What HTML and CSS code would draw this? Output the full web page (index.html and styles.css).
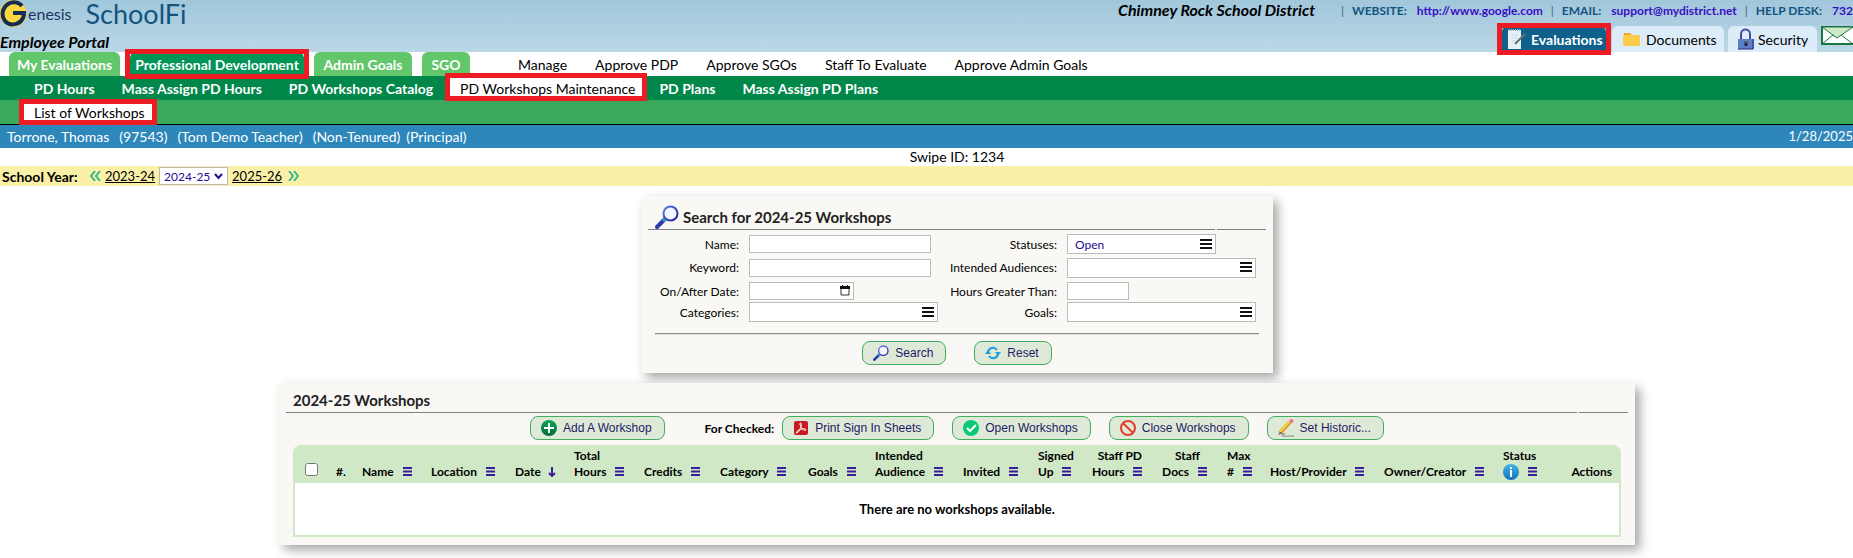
FILE: index.html
```html
<!DOCTYPE html>
<html lang="en">
<head>
    <meta charset="UTF-8">
    <meta name="viewport" content="width=device-width, initial-scale=1.0">
    <title>Genesis SchoolFi - Employee Portal</title>
    <link rel="stylesheet" href="styles.css">
</head>
<body>

    <!-- Shared icons -->
    <svg class="sprite" aria-hidden="true">
        <defs>
            <linearGradient id="lens" x1="0" y1="0" x2="1" y2="1">
                <stop offset="0" stop-color="#5a82e6"/>
                <stop offset="1" stop-color="#1c1c8c"/>
            </linearGradient>
            <linearGradient id="greenBall" x1="0" y1="0" x2="0" y2="1">
                <stop offset="0" stop-color="#0aa653"/>
                <stop offset="1" stop-color="#046b3c"/>
            </linearGradient>
            <linearGradient id="blueBall" x1="0" y1="0" x2="0" y2="1">
                <stop offset="0" stop-color="#43b4ea"/>
                <stop offset="1" stop-color="#1272b8"/>
            </linearGradient>
        </defs>
        <symbol id="magnifier" viewBox="0 0 24 24">
            <path d="M2 22 10 14" stroke="#2b3ba8" stroke-width="4" stroke-linecap="round"/>
            <path d="M8 16 11 13" stroke="#36a9d8" stroke-width="3"/>
            <circle cx="15.500" cy="8.500" r="7" fill="#f4f7ff" stroke="url(#lens)" stroke-width="2"/>
        </symbol>
        <symbol id="bars" viewBox="0 0 12 11">
            <path d="M0 1h12M0 5h12M0 9h12" stroke="#111" stroke-width="2"/>
        </symbol>
        <symbol id="sort" viewBox="0 0 9 9">
            <path d="M0 1h9M0 4.500h9M0 8h9" stroke="#3a1d9c" stroke-width="2"/>
        </symbol>
    </svg>

    <header class="banner">
        <div class="brand">
            <div class="logo-row">
                <svg class="logo" width="28" height="28" viewBox="0 0 28 28">
                    <circle cx="13" cy="13.500" r="13.500" fill="#fbd63f"/>
                    <path d="M22 6C19 2 13 1 8 4 2 8 1 16 5 21c4 5 12 4 16 0 2-2 3-4 3-8H13" fill="none" stroke="#152c55" stroke-width="4"/>
                </svg>
                <span class="logo-text">enesis</span>
                <span class="product">SchoolFi</span>
            </div>
            <div class="portal">Employee Portal</div>
        </div>
        <div class="banner-right">
            <div class="contact">
                <span class="district">Chimney Rock School District</span>
                <span class="bar">|</span>
                <span class="key">WEBSITE:</span>
                <a href="#">http://www.google.com</a>
                <span class="bar">|</span>
                <span class="key">EMAIL:</span>
                <a href="#">support@mydistrict.net</a>
                <span class="bar">|</span>
                <span class="key">HELP DESK:</span>
                <a href="#">732</a>
            </div>
            <nav class="modules">
                <a class="module current marked" href="#">
                    <svg width="18" height="20" viewBox="0 0 18 20">
                        <path d="M0 1h13v19H0z" fill="#e6f1f7"/>
                        <path d="M1 1h11" stroke="#8cb4c8" stroke-width="2" stroke-dasharray="1 1"/>
                        <path d="M3 6h7M3 9h7M3 12h5" stroke="#c5dbe6"/>
                        <path d="M7 15 17 5" stroke="#6d6d70" stroke-width="2"/>
                    </svg>
                    Evaluations
                </a>
                <a class="module documents" href="#">
                    <svg width="18" height="16" viewBox="0 0 18 16">
                        <path d="M1 2h6l2 2h8v3H1z" fill="#f0a82e"/>
                        <rect x="0" y="4" width="17" height="11" rx="1" fill="#ffcb4a"/>
                    </svg>
                    Documents
                </a>
                <a class="module security" href="#">
                    <svg width="18" height="22" viewBox="0 0 18 22">
                        <path d="M4 12V6c0-6 9-6 9 0v6" fill="none" stroke="#4a4aa0" stroke-width="2"/>
                        <rect x="1" y="11" width="16" height="10" fill="#5b7fc4"/>
                        <path d="M16 11v10H1" fill="none" stroke="#2b2b80"/>
                        <path d="M9 13v5" stroke="#2a2440" stroke-width="3"/>
                        <path d="M8 14h2" stroke="#c9a27a"/>
                    </svg>
                    Security
                </a>
                <a class="mail" href="#" aria-label="Messages">
                    <svg width="32" height="20" viewBox="0 0 32 20">
                        <path d="M1 1h32v17H1z" fill="#fff" stroke="#1c7544" stroke-width="2"/>
                        <path d="M1 1 16 12 32 1z" fill="#cfe8c6" stroke="#1c7544"/>
                        <path d="M1 18 12 9M32 18 20 9" stroke="#1c7544"/>
                    </svg>
                </a>
            </nav>
        </div>
    </header>

    <nav class="tabs">
        <a class="tab my-evals" href="#">My Evaluations</a>
        <a class="tab prof-dev current marked" href="#">Professional Development</a>
        <a class="tab admin-goals" href="#">Admin Goals</a>
        <a class="tab sgo" href="#">SGO</a>
        <div class="plain-links">
            <a href="#">Manage</a>
            <a href="#">Approve PDP</a>
            <a href="#">Approve SGOs</a>
            <a href="#">Staff To Evaluate</a>
            <a href="#">Approve Admin Goals</a>
        </div>
    </nav>

    <nav class="subnav">
        <a href="#">PD Hours</a>
        <a href="#">Mass Assign PD Hours</a>
        <a href="#">PD Workshops Catalog</a>
        <a class="current marked" href="#">PD Workshops Maintenance</a>
        <a href="#">PD Plans</a>
        <a href="#">Mass Assign PD Plans</a>
    </nav>

    <nav class="subnav third">
        <a class="current marked" href="#">List of Workshops</a>
    </nav>

    <div class="person">
        <span>Torrone, Thomas</span>
        <span>(97543)</span>
        <span>(Tom Demo Teacher)</span>
        <span>(Non-Tenured)</span>
        <span class="role">(Principal)</span>
        <span class="today">1/28/2025</span>
    </div>

    <div class="swipe">Swipe ID: 1234</div>

    <div class="year-bar">
        <label for="schoolYear">School Year:</label>
        <svg width="11" height="10" viewBox="0 0 11 10"><path d="M5 0 1 5l4 5M10 0 6 5l4 5"/></svg>
        <a href="#">2023-24</a>
        <span class="year-select">
            <select id="schoolYear"><option>2024-25</option></select>
            <svg width="9" height="7" viewBox="0 0 9 7"><path d="M1 1l3.500 4L8 1"/></svg>
        </span>
        <a href="#">2025-26</a>
        <svg class="next" width="11" height="10" viewBox="0 0 11 10"><path d="M1 0l4 5-4 5M6 0l4 5-4 5"/></svg>
    </div>

    <main>
        <section class="panel search-panel">
            <div class="panel-title with-icon">
                <h2><svg width="24" height="24"><use href="#magnifier"/></svg>Search for 2024-25 Workshops</h2>
                <span></span>
            </div>
            <form>
                <div class="fields">
                    <label for="name">Name:</label>
                    <input type="text" id="name" class="text">
                    <label for="statuses">Statuses:</label>
                    <button type="button" id="statuses" class="picker short">Open<svg width="12" height="11"><use href="#bars"/></svg></button>

                    <label for="keyword">Keyword:</label>
                    <input type="text" id="keyword" class="text">
                    <label for="audiences">Intended Audiences:</label>
                    <button type="button" id="audiences" class="picker"><svg width="12" height="11"><use href="#bars"/></svg></button>

                    <label for="afterDate">On/After Date:</label>
                    <span class="date-box">
                        <input type="text" id="afterDate">
                        <svg width="10" height="11" viewBox="0 0 10 11">
                            <path d="M1 2h8v8H1z" fill="none" stroke="#333"/>
                            <path d="M0 1h10v3H0zM2 0h1v1H2zM7 0h1v1H7z" fill="#111"/>
                        </svg>
                    </span>
                    <label for="hours">Hours Greater Than:</label>
                    <input type="text" id="hours" class="text hours">

                    <label for="categories">Categories:</label>
                    <button type="button" id="categories" class="picker"><svg width="12" height="11"><use href="#bars"/></svg></button>
                    <label for="goals">Goals:</label>
                    <button type="button" id="goals" class="picker"><svg width="12" height="11"><use href="#bars"/></svg></button>
                </div>
                <hr>
                <div class="form-buttons">
                    <button type="button" class="btn"><svg width="16" height="16"><use href="#magnifier"/></svg>Search</button>
                    <button type="button" class="btn">
                        <svg width="16" height="16" viewBox="0 0 16 16">
                            <path d="M3 7a5 5 0 0 1 9-2M13 9a5 5 0 0 1-9 2" fill="none" stroke="#1d9fdb" stroke-width="2"/>
                            <path d="M10 7h6l-3 4zM0 9h6L3 5z" fill="#1d9fdb"/>
                        </svg>Reset</button>
                </div>
            </form>
        </section>

        <section class="panel list-panel">
            <div class="panel-title">
                <h2>2024-25 Workshops</h2>
                <span></span>
            </div>
            <div class="actions">
                <button type="button" class="btn add">
                    <svg width="16" height="16" viewBox="0 0 16 16">
                        <circle cx="8" cy="8" r="8" fill="url(#greenBall)"/>
                        <path d="M8 3v10M3 8h10" stroke="#fff" stroke-width="2"/>
                    </svg>Add A Workshop</button>
                <span class="for-checked">For Checked:</span>
                <button type="button" class="btn print">
                    <svg width="16" height="16" viewBox="0 0 16 16">
                        <rect x="1" y="1" width="14" height="14" rx="2" fill="#c81a22"/>
                        <path d="M7.500 3c-2 0 1 5 3 7 2 1 3 0 2-1-2-1-8 1-9 3-1 2 2 1 3-2 1-2 3-7 1-7" fill="none" stroke="#fff"/>
                    </svg>Print Sign In Sheets</button>
                <button type="button" class="btn">
                    <svg width="16" height="16" viewBox="0 0 16 16">
                        <circle cx="8" cy="8" r="8" fill="#08c979"/>
                        <path d="M4 8l3 3 6-6" fill="none" stroke="#fff" stroke-width="2"/>
                    </svg>Open Workshops</button>
                <button type="button" class="btn">
                    <svg width="16" height="16" viewBox="0 0 16 16">
                        <circle cx="8" cy="8" r="7" fill="none" stroke="#e53e30" stroke-width="2"/>
                        <path d="M3 3l10 10" stroke="#e53e30" stroke-width="2"/>
                    </svg>Close Workshops</button>
                <button type="button" class="btn">
                    <svg width="16" height="18" viewBox="0 0 16 18">
                        <path d="M2 14 12 3" stroke="#d89a1c" stroke-width="4"/>
                        <path d="M2 13 12 2" stroke="#f5cf4c" stroke-width="2"/>
                        <circle cx="13.500" cy="2" r="2" fill="#f06aa8"/>
                        <path d="M0 16l2-3 2 1z" fill="#444"/>
                        <path d="M1 15c6-1 9 0 3 1-2 2 6 1 12 1" fill="none" stroke="#888"/>
                    </svg>Set Historic...</button>
            </div>
            <div class="table-box">
                <table>
                    <colgroup>
                        <col class="c-check"><col class="c-num"><col class="c-name"><col class="c-location"><col class="c-date">
                        <col class="c-total"><col class="c-credits"><col class="c-category"><col class="c-goals"><col class="c-audience">
                        <col class="c-invited"><col class="c-signed"><col class="c-staffpd"><col class="c-docs"><col class="c-max">
                        <col class="c-host"><col class="c-owner"><col class="c-status"><col>
                    </colgroup>
                    <thead>
                        <tr>
                            <th><input type="checkbox" aria-label="Select all workshops"></th>
                            <th>#.</th>
                            <th>Name <svg class="sort"><use href="#sort"/></svg></th>
                            <th>Location <svg class="sort"><use href="#sort"/></svg></th>
                            <th>Date <svg class="down" viewBox="0 0 8 10"><path d="M4 0v9M1 6l3 3 3-3"/></svg></th>
                            <th>Total<br>Hours <svg class="sort"><use href="#sort"/></svg></th>
                            <th>Credits <svg class="sort"><use href="#sort"/></svg></th>
                            <th>Category <svg class="sort"><use href="#sort"/></svg></th>
                            <th>Goals <svg class="sort"><use href="#sort"/></svg></th>
                            <th>Intended<br>Audience <svg class="sort"><use href="#sort"/></svg></th>
                            <th>Invited <svg class="sort"><use href="#sort"/></svg></th>
                            <th>Signed<br>Up <svg class="sort"><use href="#sort"/></svg></th>
                            <th class="right">Staff PD<br>Hours <svg class="sort"><use href="#sort"/></svg></th>
                            <th class="right"><span class="staff">Staff</span><br>Docs <svg class="sort"><use href="#sort"/></svg></th>
                            <th>Max<br># <svg class="sort"><use href="#sort"/></svg></th>
                            <th>Host/Provider <svg class="sort"><use href="#sort"/></svg></th>
                            <th>Owner/Creator <svg class="sort"><use href="#sort"/></svg></th>
                            <th>Status<br><svg class="info" viewBox="0 0 16 16"><circle cx="8" cy="8" r="8" fill="url(#blueBall)"/><path d="M8 3v2M8 6v7" stroke="#fff" stroke-width="2"/></svg><svg class="sort"><use href="#sort"/></svg></th>
                            <th class="last">Actions</th>
                        </tr>
                    </thead>
                    <tbody>
                        <tr><td colspan="19">There are no workshops available.</td></tr>
                    </tbody>
                </table>
            </div>
        </section>
    </main>

</body>
</html>
```
FILE: styles.css
```css
* {
    box-sizing: border-box;
}
body {
    margin: 0;
    font-family: Lato, "Liberation Sans", sans-serif;
    font-size: 14px;
    color: #000;
    background-color: #fff;
    overflow-x: hidden;
}
a {
    color: inherit;
    text-decoration: none;
    white-space: nowrap;
}
svg {
    flex: none;
}
.sprite {
    position: absolute;
    width: 0;
    height: 0;
}

/* Red box round the current item of each menu */
.marked {
    position: relative;
}
.marked::after {
    content: "";
    position: absolute;
    inset: -3px -5px;
    border: 5px solid #ed1c24;
    z-index: 2;
}

/* Banner */
.banner {
    display: flex;
    justify-content: space-between;
    height: 52px;
    background: linear-gradient(#a1c7db, #bad7e6);
}
.logo-row {
    display: flex;
    align-items: center;
    height: 28px;
}
.logo-text {
    color: #1e3560;
    font-size: 16px;
    line-height: 32px;
}
.product {
    margin-left: 14px;
    color: #12547f;
    font-size: 27px;
    line-height: 28px;
}
.portal {
    margin-top: 4px;
    font-size: 16px;
    line-height: 20px;
    font-weight: bold;
    font-style: italic;
}
.contact {
    display: flex;
    align-items: center;
    justify-content: flex-end;
    height: 20px;
    font-size: 12px;
    font-weight: bold;
    white-space: nowrap;
}
.contact a {
    color: #3a0cc4;
    margin-left: 10px;
}
.district {
    margin-right: 18px;
    font-size: 16px;
    font-style: italic;
    line-height: 20px;
}
.bar {
    color: #41647c;
    margin: 0 8px;
    font-weight: normal;
}
.key {
    color: #12547f;
}
.modules {
    display: flex;
    justify-content: flex-end;
    align-items: flex-start;
    margin-top: 6px;
    font-size: 14px;
}
.module {
    display: flex;
    align-items: center;
    gap: 5px;
    height: 26px;
    padding-left: 11px;
    margin-right: 4px;
    border-radius: 6px 6px 0 0;
    background-color: #dcecf8;
}
.module.current {
    width: 104px;
    padding-left: 6px;
    margin-right: 6px;
    background-color: #10608c;
    color: #fff;
    font-weight: bold;
}
.documents {
    width: 112px;
}
.security {
    width: 89px;
    padding-left: 9px;
    gap: 3px;
}
.mail svg {
    display: block;
}

/* Menus */
.tabs {
    display: flex;
    height: 24px;
    padding-left: 9px;
    gap: 10px;
    line-height: 26px;
}
.tab {
    border-radius: 6px 6px 0 0;
    background-color: #62c66b;
    color: #fff;
    font-weight: bold;
    text-align: center;
}
.tab.current {
    background-color: #009457;
}
.my-evals {
    width: 111px;
}
.prof-dev {
    width: 174px;
}
.admin-goals {
    width: 98px;
}
.sgo {
    width: 48px;
}
.plain-links {
    display: flex;
    gap: 28px;
    padding-left: 38px;
}
.subnav {
    display: flex;
    height: 24px;
    padding-left: 24px;
    gap: 7px;
    background-color: #008749;
    color: #fff;
    font-weight: bold;
    line-height: 26px;
}
.subnav a {
    padding: 0 10px;
}
.subnav .current {
    padding-right: 7px;
    background-color: #fff;
    color: #000;
    font-weight: normal;
}
.subnav .marked::after {
    bottom: -1px;
}
.subnav.third {
    height: 25px;
    background-color: #3ba95b;
    border-bottom: 1px solid #000;
}
.third .marked::after {
    top: -1px;
}

/* Person and school year */
.person {
    display: flex;
    gap: 10px;
    height: 23px;
    padding-left: 7px;
    background-color: #2d87bb;
    color: #fff;
    line-height: 23px;
}
.role {
    margin-left: -4px;
}
.today {
    margin-left: auto;
    font-size: 13px;
}
.swipe {
    padding-left: 61px;
    text-align: center;
    line-height: 18px;
}
.year-bar {
    display: flex;
    align-items: center;
    height: 20px;
    padding-left: 2px;
    background-color: #faf0a8;
}
.year-bar label {
    width: 88px;
    font-weight: bold;
}
.year-bar a {
    margin: 0 4px;
    font-size: 13px;
    text-decoration: underline;
}
.year-bar > svg path {
    fill: none;
    stroke: #2fb98f;
    stroke-width: 2;
}
.next {
    margin-left: 2px;
}
.year-select {
    position: relative;
    display: flex;
}
.year-select select {
    appearance: none;
    width: 69px;
    height: 18px;
    padding: 0 4px;
    border: 1px solid #b9b9b9;
    background-color: #fff;
    color: #2a0a96;
    font: inherit;
    font-size: 12px;
}
.year-select svg {
    position: absolute;
    right: 5px;
    top: 6px;
    pointer-events: none;
}
.year-select path {
    fill: none;
    stroke: #2a0a96;
    stroke-width: 2;
}

/* Panels */
main {
    display: flex;
    flex-direction: column;
    align-items: center;
    gap: 10px;
    padding: 10px 0 13px 61px;
}
.panel {
    padding: 0 7px;
    background-color: #f9f8f4;
    box-shadow: 5px 5px 10px rgba(0, 0, 0, 0.35);
}
.panel-title {
    display: flex;
    gap: 2px;
    height: 30px;
}
.panel-title h2 {
    flex: 1;
    display: flex;
    align-items: center;
    gap: 4px;
    margin: 0;
    padding: 5px 0 0 7px;
    border-bottom: 1px solid #808080;
    font-size: 15px;
    font-weight: bold;
    color: #222;
}
.panel-title span {
    width: 49px;
    border-bottom: 1px solid #808080;
}
.panel-title.with-icon {
    height: 34px;
}
.with-icon h2 {
    padding-top: 8px;
}
.search-panel {
    width: 632px;
    padding-bottom: 8px;
}
.fields {
    display: grid;
    grid-template-columns: 91px 189px 109px 189px;
    grid-template-rows: 22px 25px 22px 20px;
    column-gap: 10px;
    align-items: center;
    padding-top: 3px;
}
.fields label {
    text-align: right;
    font-size: 12px;
    white-space: nowrap;
}
.text, .date-box input, .picker {
    width: 182px;
    height: 18px;
    padding: 0 7px;
    border: 1px solid #bbb;
    background-color: #fff;
    font: inherit;
    font-size: 12px;
}
.picker {
    display: flex;
    align-items: center;
    justify-content: flex-end;
    width: 189px;
    height: 20px;
    padding: 0 3px 0 7px;
    color: #2a0a96;
}
.picker.short {
    width: 149px;
    justify-content: space-between;
}
.date-box {
    position: relative;
    display: flex;
}
.date-box input {
    width: 105px;
}
.date-box svg {
    position: absolute;
    left: 91px;
    top: 3px;
}
.text.hours {
    width: 62px;
}
hr {
    height: 2px;
    margin: 11px 7px 6px;
    border: 0;
    border-top: 1px solid #8c8c8c;
    border-bottom: 1px solid #ddd;
}
.form-buttons {
    display: flex;
    justify-content: center;
    gap: 28px;
}
.btn {
    display: flex;
    align-items: center;
    gap: 6px;
    height: 24px;
    padding: 0 12px 0 10px;
    border: 1px solid #3fae60;
    border-radius: 8px;
    background-color: #dfe9d8;
    color: #1e1a66;
    font-family: "Liberation Sans", Arial, sans-serif;
    font-size: 12px;
    white-space: nowrap;
}

/* Workshop list */
.list-panel {
    width: 1356px;
    padding-bottom: 8px;
}
.actions {
    display: flex;
    align-items: center;
    justify-content: center;
    gap: 18px;
    padding: 3px 0 5px;
}
.for-checked {
    margin: 0 -10px 0 22px;
    font-size: 12px;
    font-weight: bold;
}
.table-box {
    margin: 0 7px;
    border: 2px solid #d0e8c6;
    border-top: 0;
    border-radius: 8px 8px 0 0;
    overflow: hidden;
}
table {
    width: 100%;
    table-layout: fixed;
    border-collapse: collapse;
}
th {
    height: 38px;
    padding: 3px 0 3px 10px;
    background-color: #d0e8c6;
    font-size: 12px;
    line-height: 16px;
    text-align: left;
    vertical-align: bottom;
    white-space: nowrap;
}
th.right {
    padding-right: 10px;
    text-align: right;
}
th.last {
    padding-right: 7px;
    text-align: right;
}
.staff {
    margin-right: 7px;
}
th input {
    display: block;
    width: 13px;
    height: 13px;
    margin: 0 0 4px;
}
.sort {
    width: 9px;
    height: 9px;
    margin-left: 6px;
}
.down {
    width: 8px;
    height: 10px;
    margin-left: 4px;
    vertical-align: -1px;
    fill: none;
    stroke: #3a1d9c;
    stroke-width: 2;
}
.info {
    width: 16px;
    height: 16px;
    vertical-align: -4px;
}
.info + .sort {
    margin-left: 9px;
}
td {
    height: 52px;
    padding: 0;
    background-color: #fff;
    font-size: 13px;
    font-weight: bold;
    text-align: center;
}
.c-check { width: 31px; }
.c-num { width: 26px; }
.c-name { width: 69px; }
.c-location { width: 84px; }
.c-date { width: 59px; }
.c-total { width: 70px; }
.c-credits { width: 76px; }
.c-category { width: 88px; }
.c-goals { width: 67px; }
.c-audience { width: 88px; }
.c-invited { width: 75px; }
.c-signed { width: 54px; }
.c-staffpd { width: 70px; }
.c-docs { width: 65px; }
.c-max { width: 43px; }
.c-host { width: 114px; }
.c-owner { width: 119px; }
.c-status { width: 57px; }
```
